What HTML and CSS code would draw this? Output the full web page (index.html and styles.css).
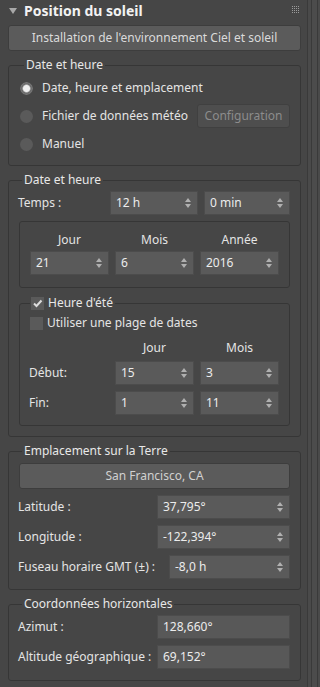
FILE: index.html
```html
<!DOCTYPE html>
<html lang="fr">
<head>
<meta charset="utf-8">
<link rel="stylesheet" href="styles.css">
</head>
<body>
<div class="app">
  <div class="panel">
    <div class="head">
      <span class="tri"></span>
      <span class="title">Position du soleil</span>
      <svg class="grip" width="8" height="8" viewBox="0 0 8 8">
        <g fill="#9a9a9a">
          <rect x="0" y="0" width="1" height="1"/><rect x="2" y="0" width="1" height="1"/><rect x="4" y="0" width="1" height="1"/><rect x="6" y="0" width="1" height="1"/>
          <rect x="0" y="2" width="1" height="1"/><rect x="2" y="2" width="1" height="1"/><rect x="4" y="2" width="1" height="1"/><rect x="6" y="2" width="1" height="1"/>
          <rect x="0" y="4" width="1" height="1"/><rect x="2" y="4" width="1" height="1"/><rect x="4" y="4" width="1" height="1"/><rect x="6" y="4" width="1" height="1"/>
          <rect x="0" y="6" width="1" height="1"/><rect x="2" y="6" width="1" height="1"/><rect x="4" y="6" width="1" height="1"/><rect x="6" y="6" width="1" height="1"/>
        </g>
      </svg>
    </div>

    <div class="btn wide">Installation de l'environnement Ciel et soleil</div>

    <fieldset class="grp g1">
      <legend>Date et heure</legend>
      <div class="radio-row"><span class="radio on"></span><span>Date, heure et emplacement</span></div>
      <div class="radio-row"><span class="radio"></span><span>Fichier de données météo</span><span class="btn cfg">Configuration</span></div>
      <div class="radio-row"><span class="radio"></span><span>Manuel</span></div>
    </fieldset>

    <fieldset class="grp g2">
      <legend>Date et heure</legend>
      <div class="time-row">
        <span class="lbl">Temps :</span>
        <div class="spin w88"><span class="val">12 h</span><span class="arr"></span></div>
        <div class="spin w86"><span class="val">0 min</span><span class="arr"></span></div>
      </div>
      <div class="box date-box">
        <span class="hdr">Jour</span><span class="hdr">Mois</span><span class="hdr">Année</span>
        <div class="spin"><span class="val">21</span><span class="arr"></span></div>
        <div class="spin"><span class="val">6</span><span class="arr"></span></div>
        <div class="spin"><span class="val">2016</span><span class="arr"></span></div>
      </div>
      <fieldset class="grp dst">
        <legend><span class="check on"><svg width="11" height="11" viewBox="0 0 11 11"><path d="M2 5.5 L4.5 8 L9.5 2.5" fill="none" stroke="#dcdcdc" stroke-width="2"/></svg></span><span>Heure d'été</span></legend>
        <div class="check-row"><span class="check"></span><span>Utiliser une plage de dates</span></div>
        <div class="range-grid">
          <span></span><span class="hdr">Jour</span><span class="hdr">Mois</span>
          <span class="lbl">Début:</span>
          <div class="spin"><span class="val">15</span><span class="arr"></span></div>
          <div class="spin"><span class="val">3</span><span class="arr"></span></div>
          <span class="lbl">Fin:</span>
          <div class="spin"><span class="val">1</span><span class="arr"></span></div>
          <div class="spin"><span class="val">11</span><span class="arr"></span></div>
        </div>
      </fieldset>
    </fieldset>

    <fieldset class="grp g3">
      <legend>Emplacement sur la Terre</legend>
      <div class="btn city">San Francisco, CA</div>
      <div class="field-row"><span class="lbl">Latitude :</span><div class="spin w133"><span class="val">37,795°</span><span class="arr"></span></div></div>
      <div class="field-row"><span class="lbl">Longitude :</span><div class="spin w133"><span class="val">-122,394°</span><span class="arr"></span></div></div>
      <div class="field-row"><span class="lbl">Fuseau horaire GMT (±) :</span><div class="spin w121"><span class="val">-8,0 h</span><span class="arr"></span></div></div>
    </fieldset>

    <fieldset class="grp g4">
      <legend>Coordonnées horizontales</legend>
      <div class="field-row"><span class="lbl">Azimut :</span><div class="spin w133 ro"><span class="val">128,660°</span></div></div>
      <div class="field-row"><span class="lbl">Altitude géographique :</span><div class="spin w133 ro"><span class="val">69,152°</span></div></div>
    </fieldset>
  </div>
  <div class="scroll"><div class="track"></div></div>
</div>
</body>
</html>
```

FILE: styles.css
```css
* { box-sizing: border-box; }
html, body { margin: 0; padding: 0; }
body {
  background: #464646;
  color: #e4e4e4;
  font-family: "Noto Sans", "DejaVu Sans", sans-serif;
  font-size: 12px;
  line-height: 14px;
  width: 320px;
  height: 687px;
  overflow: hidden;
}
.app { display: flex; height: 687px; }
.panel {
  width: 307px;
  padding: 0 6px 0 8px;
  background: #464646;
}
.scroll {
  width: 13px;
  border-left: 1px solid #3a3a3a;
  background: #4a4a4a;
  display: flex;
  padding-left: 3px;
}
.track {
  width: 7px;
  border-left: 1px solid #3a3a3a;
  border-right: 1px solid #3a3a3a;
  background: #4c4c4c;
}

.head {
  height: 22px;
  display: flex;
  align-items: center;
}
.tri {
  width: 0; height: 0;
  border-left: 4px solid transparent;
  border-right: 4px solid transparent;
  border-top: 6px solid #a8a8a8;
  margin-left: 1px;
  margin-right: 7px;
}
.title {
  font-weight: bold;
  font-size: 14px;
  color: #f2f2f2;
}
.grip { margin-left: auto; margin-right: 1px; margin-top: -3px; }

.btn {
  background: #5b5b5b;
  border: 1px solid #3d3d3d;
  border-radius: 3px;
  color: #dadada;
  display: flex;
  align-items: center;
  justify-content: center;
}
.wide { height: 26px; margin-top: 3px; }

.grp {
  margin: 7px 0 0 0;
  border: 1px solid #363636;
  border-radius: 3px;
  padding: 0 10px 10px 9px;
  min-width: 0;
}
.grp > legend {
  padding: 0 2px;
  margin-left: 4px;
  line-height: 14px;
  color: #e8e8e8;
}

.g1 { padding: 2px 10px 7px 11px; }
.radio-row {
  height: 28px;
  display: flex;
  align-items: center;
}
.radio {
  width: 13px; height: 13px;
  border-radius: 50%;
  background: #5a5a5a;
  margin-right: 9px;
  flex: none;
}
.radio.on {
  background: radial-gradient(circle, #f0f0f0 0 3px, #c8c8c8 3.5px, #6a6a6a 4.5px, #767676 6px, #5a5a5a 6.5px);
}
.cfg {
  margin-left: auto;
  width: 93px;
  height: 24px;
  background: #4e4e4e;
  border-color: #404040;
  color: #8c8c8c;
}

.g2 { padding: 4px 10px 10px 9px; }
.time-row {
  display: flex;
  align-items: center;
  height: 24px;
}
.time-row .lbl { width: 92px; }
.spin {
  height: 24px;
  background: #5a5a5a;
  border: 1px solid #4c4c4c;
  display: flex;
  align-items: center;
  padding-left: 5px;
  color: #ececec;
}
.spin .val { flex: 1; }
.arr {
  width: 7px; height: 10px;
  margin-right: 5px;
  position: relative;
}
.arr::before, .arr::after {
  content: "";
  position: absolute;
  left: 0;
  border-left: 3.5px solid transparent;
  border-right: 3.5px solid transparent;
}
.arr::before { top: 0; border-bottom: 4px solid #b0b0b0; }
.arr::after { bottom: 0; border-top: 4px solid #b0b0b0; }
.w88 { width: 88px; }
.w86 { width: 86px; margin-left: 6px; }
.w133 { width: 133px; }
.w121 { width: 121px; }
.ro { background: #585858; }

.box {
  border: 1px solid #363636;
  border-radius: 3px;
}
.date-box {
  margin: 6px 0 0 1px;
  padding: 11px 10px 12px 10px;
  display: grid;
  grid-template-columns: 79px 79px 79px;
  column-gap: 6px;
  row-gap: 4px;
}
.hdr { text-align: center; }

.dst {
  margin: 8px 0 0 1px;
  padding: 6px 10px 10px 9px;
}
.dst > legend {
  display: flex;
  align-items: center;
  margin-left: 1px;
  padding: 0 2px 0 1px;
}
.check {
  width: 13px; height: 13px;
  background: #5a5a5a;
  margin-right: 4px;
  display: inline-flex;
  align-items: center;
  justify-content: center;
  flex: none;
}
.check-row {
  display: flex;
  align-items: center;
  height: 14px;
  margin-left: 1px;
}
.range-grid {
  margin-top: 11px;
  display: grid;
  grid-template-columns: 80px 79px 79px;
  column-gap: 6px;
  row-gap: 6px;
  align-items: center;
}

.g3 { padding: 5px 10px 10px 9px; }
.city { height: 26px; margin-left: 1px; color: #d0d0d0; }
.field-row {
  display: flex;
  align-items: center;
  justify-content: space-between;
  margin-top: 6px;
}
.g4 { padding: 4px 10px 11px 9px; }
.g4 legend + .field-row { margin-top: 0; }
```
